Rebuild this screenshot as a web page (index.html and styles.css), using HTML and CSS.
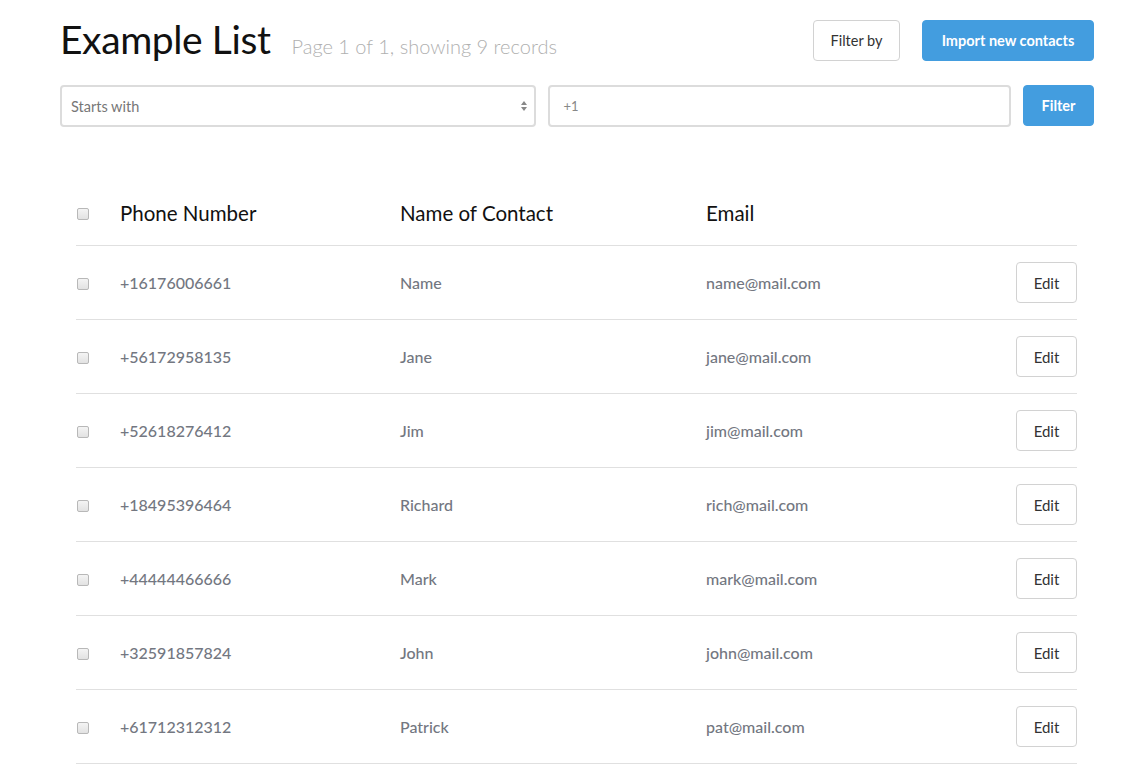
FILE: index.html
```html
<!DOCTYPE html>
<html>
<head>
<meta charset="utf-8">
<link rel="stylesheet" href="styles.css">
</head>
<body>
<div class="page">
  <div class="topbar">
    <div class="heading">
      <h1 class="title">Example List</h1>
      <span class="subtitle">Page 1 of 1, showing 9 records</span>
    </div>
    <div class="actions">
      <button class="btn btn-default btn-filterby">Filter by</button>
      <button class="btn btn-primary btn-import">Import new contacts</button>
    </div>
  </div>
  <div class="filters">
    <div class="select">
      <span>Starts with</span>
      <svg class="arrows" width="8" height="12" viewBox="0 0 8 12"><path d="M4 1 L7 5 L1 5 Z" fill="#888"/><path d="M4 11 L7 7 L1 7 Z" fill="#888"/></svg>
    </div>
    <div class="input"><span>+1</span></div>
    <button class="btn btn-primary btn-filter">Filter</button>
  </div>
  <div class="table">
    <div class="row head">
      <span class="cb"></span>
      <span class="c-phone">Phone Number</span>
      <span class="c-name">Name of Contact</span>
      <span class="c-email">Email</span>
      <span class="c-act"></span>
    </div>
    <div class="row"><span class="cb"></span><span class="c-phone">+16176006661</span><span class="c-name">Name</span><span class="c-email">name@mail.com</span><span class="c-act"><button class="btn btn-default btn-edit">Edit</button></span></div>
    <div class="row"><span class="cb"></span><span class="c-phone">+56172958135</span><span class="c-name">Jane</span><span class="c-email">jane@mail.com</span><span class="c-act"><button class="btn btn-default btn-edit">Edit</button></span></div>
    <div class="row"><span class="cb"></span><span class="c-phone">+52618276412</span><span class="c-name">Jim</span><span class="c-email">jim@mail.com</span><span class="c-act"><button class="btn btn-default btn-edit">Edit</button></span></div>
    <div class="row"><span class="cb"></span><span class="c-phone">+18495396464</span><span class="c-name">Richard</span><span class="c-email">rich@mail.com</span><span class="c-act"><button class="btn btn-default btn-edit">Edit</button></span></div>
    <div class="row"><span class="cb"></span><span class="c-phone">+44444466666</span><span class="c-name">Mark</span><span class="c-email">mark@mail.com</span><span class="c-act"><button class="btn btn-default btn-edit">Edit</button></span></div>
    <div class="row"><span class="cb"></span><span class="c-phone">+32591857824</span><span class="c-name">John</span><span class="c-email">john@mail.com</span><span class="c-act"><button class="btn btn-default btn-edit">Edit</button></span></div>
    <div class="row"><span class="cb"></span><span class="c-phone">+61712312312</span><span class="c-name">Patrick</span><span class="c-email">pat@mail.com</span><span class="c-act"><button class="btn btn-default btn-edit">Edit</button></span></div>
  </div>
</div>
</body>
</html>
```
FILE: styles.css
```css
html, body {
  margin: 0;
  padding: 0;
  background: #fff;
  font-family: "Lato", "Open Sans", sans-serif;
  overflow: hidden;
}
.page {
  padding: 19px 54px 0 60px;
}
.topbar {
  display: flex;
  justify-content: space-between;
  align-items: flex-start;
  height: 66px;
}
.heading {
  display: flex;
  align-items: baseline;
  gap: 21px;
}
.title {
  margin: 0;
  font-weight: 400;
  font-size: 39px;
  line-height: 40px;
  color: #111;
  letter-spacing: -0.4px;
}
.subtitle {
  font-size: 20px;
  color: #b0b0b0;
  font-weight: 300;
}
.actions {
  display: flex;
  gap: 22px;
  padding-top: 1px;
}
.btn {
  font-family: inherit;
  border-radius: 4px;
  cursor: pointer;
  padding: 0;
}
.btn-default {
  background: #fff;
  border: 1px solid #d2d2d2;
  color: #333;
  font-size: 14.5px;
}
.btn-primary {
  background: #439ddf;
  border: 1px solid #439ddf;
  color: #fff;
  font-weight: 700;
  font-size: 14.5px;
}
.btn-filterby { width: 87px; height: 41px; }
.btn-import { width: 172px; height: 41px; }
.btn-filter { width: 71px; height: 41px; }
.filters {
  display: flex;
  gap: 12px;
  height: 41px;
}
.select, .input {
  box-sizing: border-box;
  height: 42px;
  border: 2px solid #dcdcdc;
  border-radius: 4px;
  display: flex;
  align-items: center;
  font-size: 14.5px;
  color: #777;
}
.select {
  width: 476px;
  padding: 0 6px 0 9px;
  justify-content: space-between;
}
.input {
  width: 464px;
  padding: 0 14px;
  color: #888;
  font-size: 13px;
}
.table {
  margin: 54px 17px 0 16px;
}
.row {
  display: grid;
  grid-template-columns: 44px 280px 306px 1fr 62px;
  align-items: center;
  height: 73px;
  border-bottom: 1px solid #e0e0e0;
  font-size: 16px;
  color: #737781;
  font-weight: 500;
}
.row.head {
  height: 65px;
  color: #111;
  font-size: 20.5px;
  font-weight: 400;
}
.cb {
  display: block;
  width: 10px;
  height: 10px;
  border: 1px solid #b8b8b8;
  border-radius: 2px;
  background: linear-gradient(#f4f4f4, #e2e2e2);
  margin-left: 1px;
  margin-top: 2px;
}
.c-act { display: flex; justify-content: flex-end; }
.btn-edit { width: 61px; height: 41px; font-size: 15px; }
```
